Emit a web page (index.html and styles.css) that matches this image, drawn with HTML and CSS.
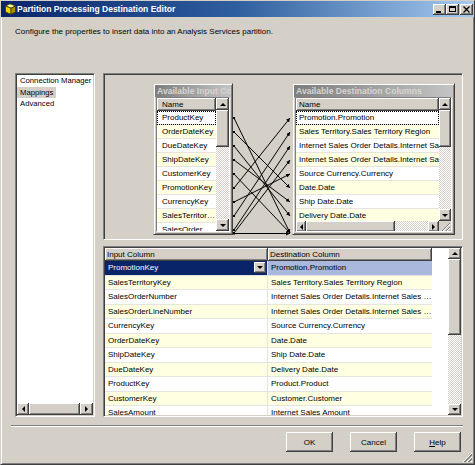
FILE: index.html
```html
<!DOCTYPE html>
<html>
<head>
<meta charset="utf-8">
<title>Partition Processing Destination Editor</title>
<link rel="stylesheet" href="styles.css">
</head>
<body>
<div class="window">
  <div class="titlebar">
    <svg class="appicon" width="11" height="12" viewBox="0 0 11 12">
      <polygon points="0.5,3 5,0.8 10.5,3 6,5.2" fill="#ffff9a" stroke="#3a3a00" stroke-width="0.8"/>
      <polygon points="0.5,3 6,5.2 6,11.3 0.5,9" fill="#f2d600" stroke="#3a3a00" stroke-width="0.8"/>
      <polygon points="6,5.2 10.5,3 10.5,9 6,11.3" fill="#a88e00" stroke="#3a3a00" stroke-width="0.8"/>
    </svg>
    <span class="title">Partition Processing Destination Editor</span>
    <div class="capbtns">
      <span class="cbtn"><svg width="13" height="11"><rect x="3" y="7" width="5" height="2" fill="#000"/></svg></span>
      <span class="cbtn"><svg width="13" height="11"><rect x="3.5" y="2.5" width="6" height="5" fill="none" stroke="#000"/><rect x="3" y="2" width="7" height="2" fill="#000"/></svg></span>
      <span class="cbtn close"><svg width="13" height="11"><path d="M3.5 2.5l6 6M9.5 2.5l-6 6" stroke="#000" stroke-width="1.3"/></svg></span>
    </div>
  </div>

  <div class="desc">Configure the properties to insert data into an Analysis Services partition.</div>

  <div class="main">
    <div class="navlist sunken">
      <div class="navitems">
        <div class="navitem"><span>Connection Manager</span></div>
        <div class="navitem sel"><span>Mappings</span></div>
        <div class="navitem"><span>Advanced</span></div>
      </div>
      <div class="hsb">
        <span class="sbtn left"></span>
        <span class="thumb"></span>
        <span class="sbtn right"></span>
      </div>
    </div>

    <div class="rightpane">
      <div class="diagram sunken">
        <svg class="links" width="358" height="165" viewBox="0 0 358 165">
          <defs>
            <marker id="arr" markerWidth="4" markerHeight="4" refX="4" refY="2" orient="auto" markerUnits="userSpaceOnUse">
              <path d="M0,0 L4,2 L0,4z" fill="#000"/>
            </marker>
            <marker id="dot" markerWidth="2" markerHeight="2" refX="1" refY="1" markerUnits="userSpaceOnUse">
              <rect width="2" height="2" fill="#000"/>
            </marker>
          </defs>
          <g stroke="#000" stroke-width="1" fill="none" marker-start="url(#dot)" marker-end="url(#arr)">
            <line x1="130" y1="44" x2="186" y2="159"/>
            <line x1="130" y1="58" x2="186" y2="114"/>
            <line x1="130" y1="72" x2="186" y2="142"/>
            <line x1="130" y1="86" x2="186" y2="128"/>
            <line x1="130" y1="100" x2="186" y2="159"/>
            <line x1="130" y1="114" x2="186" y2="44"/>
            <line x1="130" y1="128" x2="186" y2="100"/>
            <line x1="130" y1="142" x2="186" y2="58"/>
            <line x1="130" y1="156" x2="186" y2="72"/>
            <line x1="130" y1="159" x2="186" y2="86"/>
            <line x1="130" y1="159.5" x2="186" y2="159.5"/>
          </g>
        </svg>

        <div class="colbox inputbox">
          <div class="cap">Available Input Columns</div>
          <div class="clist">
            <div class="cbody">
              <div class="chead">Name</div>
              <div class="crows">
                <div class="crow focus">ProductKey</div>
                <div class="crow">OrderDateKey</div>
                <div class="crow">DueDateKey</div>
                <div class="crow">ShipDateKey</div>
                <div class="crow">CustomerKey</div>
                <div class="crow">PromotionKey</div>
                <div class="crow">CurrencyKey</div>
                <div class="crow">SalesTerritoryKey</div>
                <div class="crow">SalesOrderNumber</div>
              </div>
            </div>
            <div class="vsb">
              <span class="sbtn up"></span>
              <span class="thumb vthumb"></span>
              <span class="track"></span>
              <span class="sbtn down"></span>
            </div>
          </div>
        </div>

        <div class="colbox destbox">
          <div class="cap">Available Destination Columns</div>
          <div class="clist">
            <div class="cbody">
              <div class="chead">Name</div>
              <div class="crows clip">
                <div class="crow focus">Promotion.Promotion</div>
                <div class="crow">Sales Territory.Sales Territory Region</div>
                <div class="crow">Internet Sales Order Details.Internet Sales Order Number</div>
                <div class="crow">Internet Sales Order Details.Internet Sales Order Line Number</div>
                <div class="crow">Source Currency.Currency</div>
                <div class="crow">Date.Date</div>
                <div class="crow">Ship Date.Date</div>
                <div class="crow">Delivery Date.Date</div>
                <div class="crow">Product.Product</div>
              </div>
            </div>
            <div class="vsb">
              <span class="sbtn up"></span>
              <span class="thumb vthumb"></span>
              <span class="track"></span>
              <span class="sbtn down"></span>
            </div>
            <div class="hsb dhsb">
              <span class="sbtn left"></span>
              <span class="thumb hthumb"></span>
              <span class="track"></span>
              <span class="sbtn right"></span>
            </div>
            <div class="sgrip">
              <svg width="12" height="11"><path d="M11 2L2 11M11 6L6 11M11 9.5L9.5 11" stroke="#808080"/><path d="M11 3L3 11M11 7L7 11" stroke="#fff"/></svg>
            </div>
          </div>
        </div>
      </div>

      <div class="grid sunken">
        <div class="gtable">
          <div class="ghead">
            <div class="gh gc1">Input Column</div>
            <div class="gh gc2">Destination Column</div>
          </div>
          <div class="grows">
            <div class="grow sel">
              <div class="gc1"><span>PromotionKey</span><span class="dd"></span></div>
              <div class="gc2">Promotion.Promotion</div>
            </div>
            <div class="grow"><div class="gc1">SalesTerritoryKey</div><div class="gc2">Sales Territory.Sales Territory Region</div></div>
            <div class="grow"><div class="gc1">SalesOrderNumber</div><div class="gc2">Internet Sales Order Details.Internet Sales Order Number</div></div>
            <div class="grow"><div class="gc1">SalesOrderLineNumber</div><div class="gc2">Internet Sales Order Details.Internet Sales Order Line Number</div></div>
            <div class="grow"><div class="gc1">CurrencyKey</div><div class="gc2">Source Currency.Currency</div></div>
            <div class="grow"><div class="gc1">OrderDateKey</div><div class="gc2">Date.Date</div></div>
            <div class="grow"><div class="gc1">ShipDateKey</div><div class="gc2">Ship Date.Date</div></div>
            <div class="grow"><div class="gc1">DueDateKey</div><div class="gc2">Delivery Date.Date</div></div>
            <div class="grow"><div class="gc1">ProductKey</div><div class="gc2">Product.Product</div></div>
            <div class="grow"><div class="gc1">CustomerKey</div><div class="gc2">Customer.Customer</div></div>
            <div class="grow"><div class="gc1">SalesAmount</div><div class="gc2">Internet Sales Amount</div></div>
          </div>
        </div>
        <div class="vsb gvsb">
          <span class="sbtn up"></span>
          <span class="thumb gthumb"></span>
          <span class="track"></span>
          <span class="sbtn down"></span>
        </div>
      </div>
    </div>
  </div>

  <div class="sep"></div>
  <div class="buttons">
    <button class="btn">OK</button>
    <button class="btn">Cancel</button>
    <button class="btn"><u>H</u>elp</button>
    <span class="wgrip">
      <svg width="11" height="11"><path d="M10 1L1 10M10 5L5 10M10 9L9 10" stroke="#fff"/><path d="M10 2L2 10M10 3L3 10M10 6L6 10M10 7L7 10" stroke="#808080"/></svg>
    </span>
  </div>
</div>
</body>
</html>
```

FILE: styles.css
```css
* { box-sizing: border-box; }
html, body { margin: 0; padding: 0; }
body {
  background: #d4d0c8;
  font-family: "Liberation Sans", Arial, sans-serif;
  font-size: 8px;
  color: #000;
}

.window {
  width: 475px;
  height: 465px;
  border: 1px solid;
  border-color: #d4d0c8 #404040 #404040 #d4d0c8;
  box-shadow: inset 1px 1px #fff, inset -1px -1px #808080;
  background: #d4d0c8;
  display: flex;
  flex-direction: column;
  overflow: hidden;
}

/* title bar */
.titlebar {
  height: 16px;
  flex: none;
  display: flex;
  align-items: center;
  padding: 0 1px 0 4px;
  background: linear-gradient(to right, #0a246a, #2f5f9e 50%, #a6caf0);
  color: #fff;
}
.appicon { display: block; flex: none; }
.title {
  margin-left: 1px;
  font-weight: bold;
  font-size: 8.5px;
  white-space: nowrap;
}
.capbtns { margin-left: auto; display: flex; }
.cbtn {
  width: 13px;
  height: 11px;
  display: block;
  background: #d4d0c8;
  box-shadow: inset -1px -1px #404040, inset 1px 1px #fff, inset -2px -2px #808080;
}
.cbtn svg { display: block; }
.cbtn.close { margin-left: 1px; }

.desc {
  margin: 9px 0 0 14px;
  line-height: 12px;
  white-space: nowrap;
}

/* common 3D */
.sunken {
  border: 1px solid;
  border-color: #808080 #fff #fff #808080;
  padding: 1px;
  box-shadow: inset 1px 1px #404040, inset -1px -1px #d4d0c8;
}
.sbtn, .thumb, .chead, .gh, .dd, .btn {
  background: #d4d0c8;
  box-shadow: inset -1px -1px #404040, inset 1px 1px #fff, inset -2px -2px #808080;
}
.track {
  background-image: repeating-conic-gradient(#fff 0 25%, #d4d0c8 0 50%);
  background-size: 2px 2px;
  flex: 1;
}

/* scroll buttons */
.sbtn {
  display: flex;
  align-items: center;
  justify-content: center;
  flex: none;
}
.sbtn::before {
  content: "";
  width: 0;
  height: 0;
  border: 3px solid transparent;
}
.sbtn.up::before { border-top-width: 0; border-bottom-color: #000; }
.sbtn.down::before { border-bottom-width: 0; border-top-color: #000; }
.sbtn.left::before { border-left-width: 0; border-right-color: #000; }
.sbtn.right::before { border-right-width: 0; border-left-color: #000; }

.vsb { display: flex; flex-direction: column; min-height: 0; }
.vsb .sbtn { height: 12px; }
.hsb { display: flex; flex: none; }

/* main */
.main {
  display: flex;
  gap: 8px;
  margin: 35px 0 0 14px;
  height: 344px;
  flex: none;
}
.navlist {
  width: 80px;
  background: #fff;
  display: flex;
  flex-direction: column;
}
.navitems { flex: 1; font-size: 7.7px; }
.navitem { height: 11.5px; line-height: 11.5px; white-space: nowrap; }
.navitem span { display: inline-block; padding: 0 3px; }
.navitem.sel span { background: #d4d0c8; }
.navlist .hsb { height: 12px; }
.navlist .hsb .sbtn { width: 12px; }
.navlist .hsb .sbtn.right { width: 13px; }
.navlist .hsb .thumb { flex: 1; }

.rightpane {
  width: 360px;
  display: flex;
  flex-direction: column;
  gap: 6px;
}
.diagram {
  height: 167px;
  position: relative;
  background: #d4d0c8;
}
.links { position: absolute; left: 0; top: 0; display: block; }

/* column boxes */
.colbox {
  position: absolute;
  top: 9px;
  height: 152px;
  border: 1px solid;
  border-color: #d4d0c8 #404040 #404040 #d4d0c8;
  padding: 1px;
  box-shadow: inset 1px 1px #fff, inset -1px -1px #808080;
  background: #d4d0c8;
  display: flex;
  flex-direction: column;
}
.inputbox { left: 49px; width: 80px; }
.destbox { left: 188px; width: 163px; }
.cap {
  height: 12px;
  flex: none;
  line-height: 12px;
  padding-left: 2px;
  background: linear-gradient(to right, #7d7d7d, #c4c4c4);
  color: #d8d6d0;
  font-weight: bold;
  font-size: 8.6px;
  white-space: nowrap;
  overflow: hidden;
}
.clist {
  flex: 1;
  min-height: 0;
  margin: 0 1px 1px;
  border: 1px solid;
  border-color: #808080 #fff #fff #808080;
  background: #fff;
  display: grid;
  overflow: hidden;
}
.inputbox .clist { grid-template-columns: 59px 13px; }
.destbox .clist { grid-template-columns: 143px 12px; grid-template-rows: 123px 11px; }
.cbody { overflow: hidden; min-height: 0; }
.chead {
  height: 13px;
  line-height: 13px;
  padding-left: 5px;
}
.destbox .chead { padding-left: 3px; }
.crow {
  height: 14px;
  line-height: 13px;
  padding-left: 5px;
  white-space: nowrap;
  overflow: hidden;
  text-overflow: ellipsis;
  border-bottom: 1px solid #e6e4de;
  background: #fff;
}
.destbox .crow { padding-left: 3px; text-overflow: clip; }
.crows .crow:nth-child(even) { background: #ffffe1; }
.crow.focus { outline: 1px dotted #000; outline-offset: -1px; }
.vthumb { height: 37px; flex: none; }
.dhsb { height: 11px; }
.dhsb .sbtn { width: 10px; }
.dhsb .sbtn.right { width: 11px; }
.hthumb { width: 89px; flex: none; }
.sgrip { background: #d4d0c8; }
.sgrip svg { display: block; }

/* grid */
.grid {
  height: 171px;
  display: flex;
  background: #fff;
}
.gtable { flex: 1; overflow: hidden; }
.gvsb { width: 13px; flex: none; }
.gvsb .sbtn { height: 11px; }
.gthumb { height: 76px; flex: none; }
.ghead { display: flex; height: 13px; }
.gh {
  height: 13px;
  line-height: 13px;
  padding-left: 2px;
  white-space: nowrap;
}
.gc1 { width: 163px; flex: none; }
.gc2 { width: 164px; flex: none; }
.grow {
  display: flex;
  height: 14.5px;
  line-height: 14px;
}
.grow .gc1, .grow .gc2 {
  padding-left: 3px;
  white-space: nowrap;
  overflow: hidden;
  text-overflow: ellipsis;
  border-bottom: 1px solid #e6e4de;
  background: #fff;
}
.grow .gc1 { border-right: 1px solid #e6e4de; }
.grows .grow:nth-child(even) .gc1,
.grows .grow:nth-child(even) .gc2 { background: #ffffe1; }
.grow.sel .gc1 {
  background: #0a246a;
  color: #fff;
  display: flex;
  align-items: center;
  justify-content: space-between;
  padding-right: 1px;
}
.grow.sel .gc2 { background: #a9b8dc; }
.dd {
  width: 12px;
  height: 11px;
  flex: none;
  display: flex;
  align-items: center;
  justify-content: center;
}
.dd::before {
  content: "";
  border: 3px solid transparent;
  border-bottom-width: 0;
  border-top-color: #000;
}

/* footer */
.sep {
  margin: 8px 11px 0 10px;
  border-top: 1px solid #808080;
  border-bottom: 1px solid #fff;
  flex: none;
}
.buttons {
  flex: 1;
  display: flex;
  justify-content: flex-end;
  align-items: flex-start;
  padding: 5px 1px 0 0;
}
.btn {
  width: 47px;
  height: 20px;
  margin-left: 17px;
  border: none;
  padding: 0;
  font: inherit;
  color: #000;
}
.wgrip {
  align-self: flex-end;
  margin: 0 0 1px 1px;
  width: 11px;
  height: 11px;
}
.wgrip svg { display: block; }
```
